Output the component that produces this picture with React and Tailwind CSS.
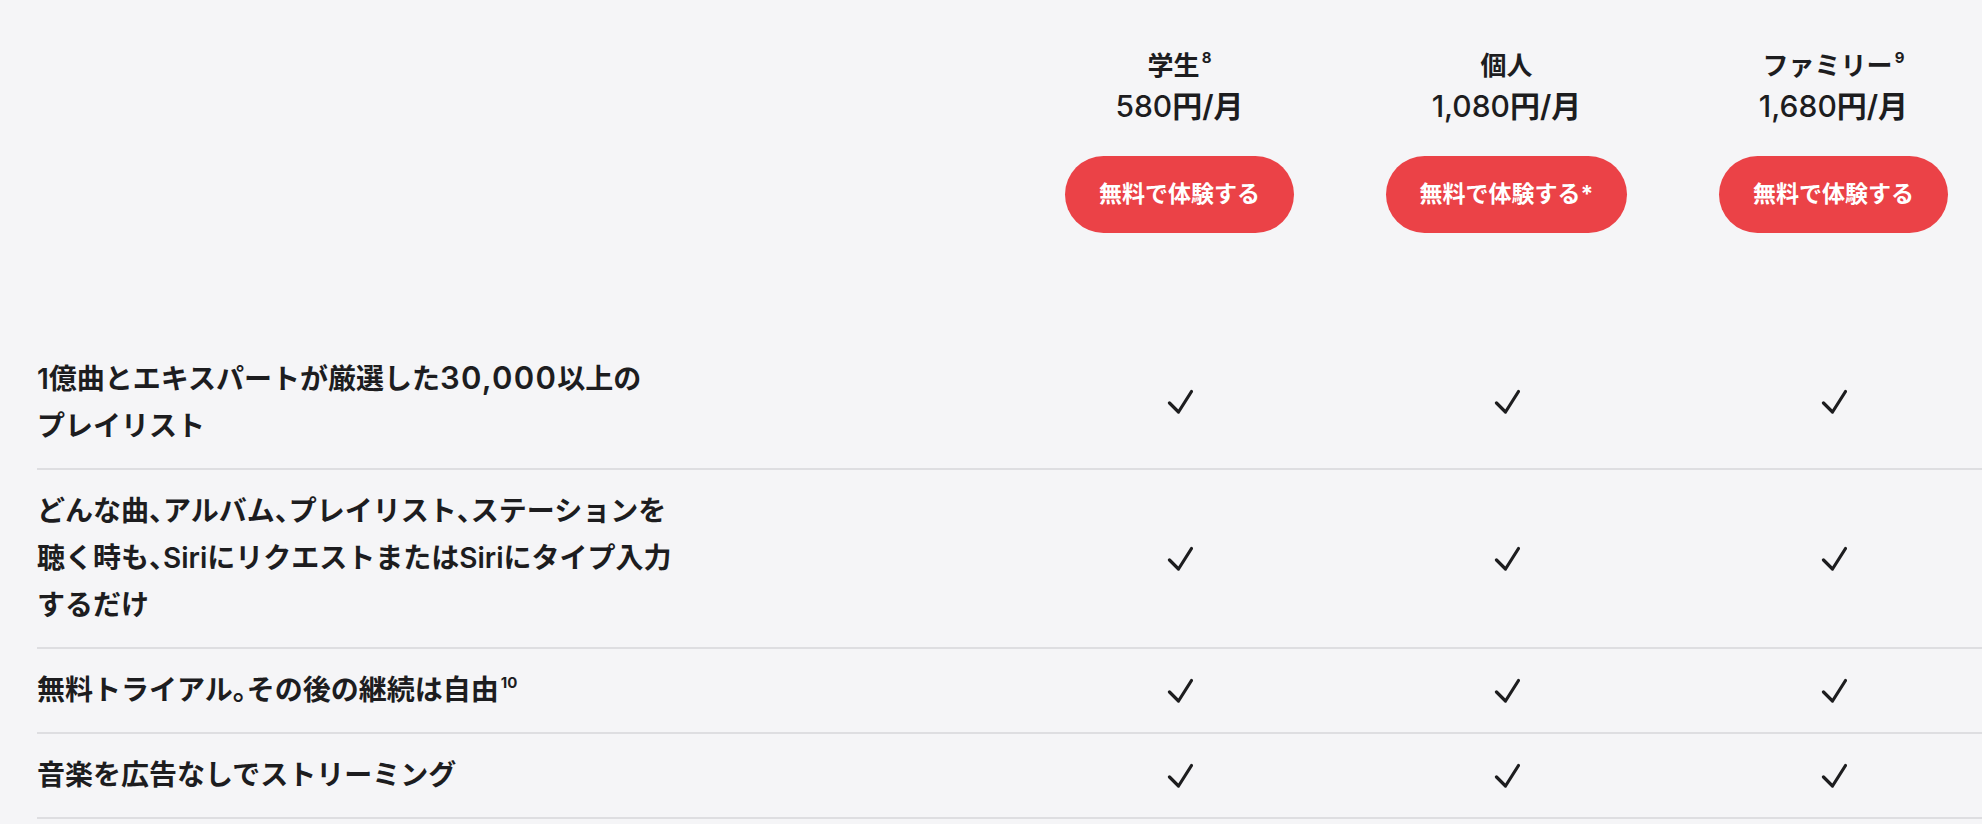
import { Fragment } from "react";

const plans = [
  { name: "学生", sup: "8", price: "580", cta: "無料で体験する" },
  { name: "個人", price: "1,080", cta: "無料で体験する*" },
  { name: "ファミリー", sup: "9", price: "1,680", cta: "無料で体験する" },
];

// half-width punctuation, as the original font sets it
const P = ({ children }) => (
  <span className="[font-feature-settings:'halt']">{children}</span>
);

const features = [
  {
    lines: [
      <>
        1億曲とエキスパートが厳選した
        <span className="text-[31px] tracking-[0.04em]">30,000</span>以上の
      </>,
      "プレイリスト",
    ],
  },
  {
    lines: [
      <>
        どんな曲<P>、</P>アルバム<P>、</P>プレイリスト<P>、</P>ステーションを
      </>,
      <>
        聴く時も<P>、</P>SiriにリクエストまたはSiriにタイプ入力
      </>,
      "するだけ",
    ],
  },
  {
    lines: [
      <>
        無料トライアル<P>。</P>その後の継続は自由
      </>,
    ],
    sup: "10",
  },
  { lines: ["音楽を広告なしでストリーミング"] },
];

const Check = () => (
  <svg width="26" height="26" viewBox="0 0 26 26" fill="none">
    <path
      d="M2.5 14 L11.5 23 L24.5 2.5"
      stroke="#1d1d1f"
      strokeWidth="3.2"
      strokeLinecap="round"
      strokeLinejoin="round"
    />
  </svg>
);

const Sup = ({ children }) => (
  <sup className="text-[15px] font-bold ml-[2px] top-[-0.8em]">{children}</sup>
);

export default function App() {
  return (
    <div className="w-full h-[824px] overflow-hidden bg-[#f5f5f7] text-[#1d1d1f] font-['Inter','Noto_Sans_CJK_JP',sans-serif]">
      <div className="pl-[37px]">
        <div className="w-[1960px]">
          {/* Plan headers */}
          <div className="grid grid-cols-[979px_327px_327px_327px] pt-[46px] pb-[103px]">
            <div />
            {plans.map((plan) => (
              <div key={plan.name} className="flex flex-col items-center">
                <p className="text-[26px] leading-[40px] font-bold">
                  {plan.name}
                  {plan.sup && <Sup>{plan.sup}</Sup>}
                </p>
                <p className="text-[30px] leading-[40px] font-semibold">
                  <span className="font-medium">{plan.price}</span>円/月
                </p>
                <button className="mt-[30px] h-[77px] px-[34px] rounded-full bg-[#eb4247] text-white text-[23px] font-bold">
                  {plan.cta}
                </button>
              </div>
            ))}
          </div>

          {/* Feature rows */}
          {features.map((row, i) => (
            <div
              key={i}
              className="grid grid-cols-[979px_327px_327px_327px] border-b-2 border-[#dedee1]"
            >
              <div className="py-[18px] text-[28px] leading-[47px] font-semibold">
                {row.lines.map((line, j) => (
                  <Fragment key={j}>
                    {j > 0 && <br />}
                    {line}
                  </Fragment>
                ))}
                {row.sup && <Sup>{row.sup}</Sup>}
              </div>
              {plans.map((plan) => (
                <div key={plan.name} className="flex items-center justify-center">
                  <Check />
                </div>
              ))}
            </div>
          ))}
        </div>
      </div>
    </div>
  );
}
